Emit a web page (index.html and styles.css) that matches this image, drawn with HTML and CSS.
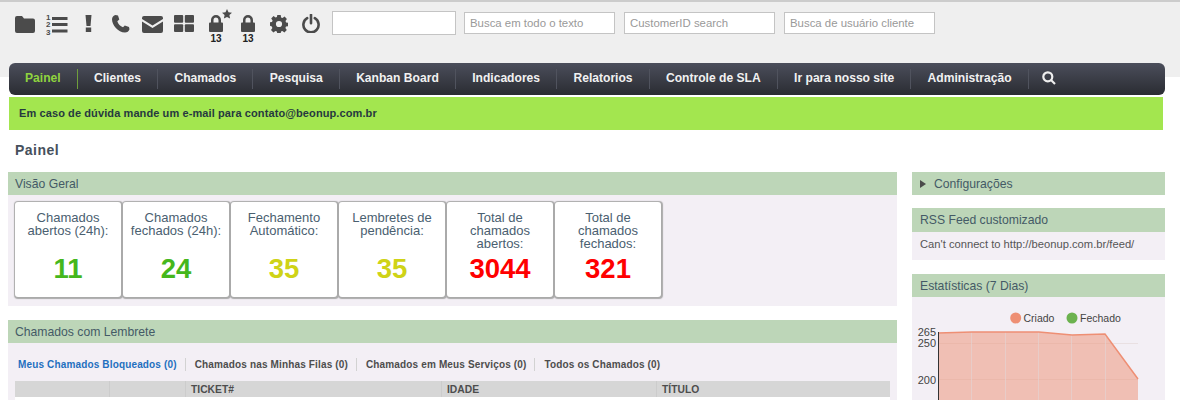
FILE: index.html
```html
<!DOCTYPE html>
<html lang="pt-BR">
<head>
<meta charset="utf-8">
<title>Painel</title>
<link rel="stylesheet" href="styles.css">
</head>
<body>
<header class="toolbar">
  <div class="icons">
    <a class="ico ico-folder"><svg width="20" height="17" viewBox="0 0 20 17"><path d="M2 0h5l2 2.500h9a2 2 0 0 1 2 2V15a2 2 0 0 1-2 2H2a2 2 0 0 1-2-2V2a2 2 0 0 1 2-2z"/></svg></a>
    <a class="ico ico-list"><svg width="23" height="21" viewBox="0 0 23 21"><path d="M6 3h15.500v3H6zM6 9h15.500v3H6zM6 15.500h15.500v3H6z"/><text x="0" y="6" class="num">1</text><text x="0" y="13" class="num">2</text><text x="0" y="20.500" class="num">3</text></svg></a>
    <a class="ico ico-bang"><svg width="7" height="17" viewBox="0 0 7 17"><path d="M.5 0h6l-1 11H1.500zM.8 12.500h5.400V17H.8z"/></svg></a>
    <a class="ico ico-phone"><svg width="18" height="18" viewBox="0 0 18 18"><path d="M3.500 0 6 .5l1.300 4-2 1.700c.8 2.800 3 5 5.700 6l1.800-1.800 4.200 1.500.5 2.300c-.5 2-2.500 3.300-4.500 3.300C6 17.500 0 10 0 4.200 0 2.300 1.500.5 3.500 0z"/></svg></a>
    <a class="ico ico-mail"><svg width="21" height="17" viewBox="0 0 21 17"><path d="M2 0h17a2 2 0 0 1 2 2v1l-10.500 6.500L0 3V2a2 2 0 0 1 2-2zM0 5.500l10.500 6.500L21 5.500V15a2 2 0 0 1-2 2H2a2 2 0 0 1-2-2z"/></svg></a>
    <a class="ico ico-grid"><svg width="20" height="17" viewBox="0 0 20 17"><rect width="9.200" height="7.800" rx="1"/><rect x="10.800" width="9.200" height="7.800" rx="1"/><rect y="9.200" width="9.200" height="7.800" rx="1"/><rect x="10.800" y="9.200" width="9.200" height="7.800" rx="1"/></svg></a>
    <a class="ico ico-lockstar">
      <svg class="star" width="10" height="10" viewBox="0 0 10 10"><path d="m5 0 1.500 3.300 3.500.4-2.600 2.400.7 3.500L5 7.900 1.900 9.600l.7-3.500L0 3.700l3.500-.4z"/></svg>
      <svg width="14" height="17" viewBox="0 0 14 17"><path d="M0 8.500a1 1 0 0 1 1-1h1V5a5 5 0 0 1 10 0v2.500h1a1 1 0 0 1 1 1V16a1 1 0 0 1-1 1H1a1 1 0 0 1-1-1zM4.500 7.500h5V5a2.500 2.500 0 0 0-5 0z"/></svg>
      <span class="count">13</span>
    </a>
    <a class="ico ico-lock">
      <svg width="14" height="17" viewBox="0 0 14 17"><path d="M0 8.500a1 1 0 0 1 1-1h1V5a5 5 0 0 1 10 0v2.500h1a1 1 0 0 1 1 1V16a1 1 0 0 1-1 1H1a1 1 0 0 1-1-1zM4.500 7.500h5V5a2.500 2.500 0 0 0-5 0z"/></svg>
      <span class="count">13</span>
    </a>
    <a class="ico ico-gear"><svg width="18" height="18" viewBox="0 0 18 18"><path fill-rule="evenodd" d="M7.300 0h3.400l.4 2.500 1.400.6 2.100-1.500 2.300 2.400-1.400 2 .6 1.500 2 .3v3.400l-2.100.4-.6 1.400 1.400 2.100-2.400 2.300-2-1.400-1.400.6-.4 2.400H7.300l-.4-2.400-1.500-.6-2 1.400-2.400-2.300 1.400-2.100-.6-1.400L0 10.700V7.300l2-.3.600-1.500-1.400-2 2.300-2.400 2.100 1.500 1.300-.6zM9 5.900a3.100 3.100 0 1 0 0 6.200 3.100 3.100 0 0 0 0-6.200z"/></svg></a>
    <a class="ico ico-power"><svg width="18" height="19" viewBox="0 0 18 19"><path class="stroke" d="M5.200 4.200a7.600 7.600 0 1 0 7.600 0M9 .8v8.400"/></svg></a>
  </div>
  <div class="searches">
    <input class="search search-first" type="text">
    <input class="search" type="text" placeholder="Busca em todo o texto">
    <input class="search" type="text" placeholder="CustomerID search">
    <input class="search" type="text" placeholder="Busca de usuário cliente">
  </div>
</header>

<nav class="navbar">
  <a class="nav-item active">Painel</a>
  <a class="nav-item">Clientes</a>
  <a class="nav-item">Chamados</a>
  <a class="nav-item">Pesquisa</a>
  <a class="nav-item">Kanban Board</a>
  <a class="nav-item">Indicadores</a>
  <a class="nav-item">Relatorios</a>
  <a class="nav-item">Controle de SLA</a>
  <a class="nav-item">Ir para nosso site</a>
  <a class="nav-item">Administração</a>
  <a class="nav-search"><svg width="14" height="14" viewBox="0 0 14 14"><circle cx="5.800" cy="5.800" r="4.500"/><path d="m9 9 4 4"/></svg></a>
</nav>

<div class="notice">Em caso de dúvida mande um e-mail para contato@beonup.com.br</div>

<h1 class="page-title">Painel</h1>

<div class="layout">
  <main class="main-col">
    <section class="panel">
      <h2 class="panel-head">Visão Geral</h2>
      <div class="cards">
        <div class="card"><p class="card-label">Chamados abertos (24h):</p><p class="card-value green">11</p></div>
        <div class="card"><p class="card-label">Chamados fechados (24h):</p><p class="card-value green">24</p></div>
        <div class="card"><p class="card-label">Fechamento Automático:</p><p class="card-value yellow">35</p></div>
        <div class="card"><p class="card-label">Lembretes de pendência:</p><p class="card-value yellow">35</p></div>
        <div class="card"><p class="card-label">Total de chamados abertos:</p><p class="card-value red">3044</p></div>
        <div class="card"><p class="card-label">Total de chamados fechados:</p><p class="card-value red">321</p></div>
      </div>
    </section>
    <section class="panel panel-tickets">
      <h2 class="panel-head">Chamados com Lembrete</h2>
      <div class="tickets-body">
        <ul class="tabs">
          <li class="tab selected">Meus Chamados Bloqueados (0)</li>
          <li class="tab">Chamados nas Minhas Filas (0)</li>
          <li class="tab">Chamados em Meus Serviços (0)</li>
          <li class="tab">Todos os Chamados (0)</li>
        </ul>
        <div class="table-head">
          <span class="th th-a"></span>
          <span class="th th-b"></span>
          <span class="th th-c">TICKET#</span>
          <span class="th th-d">IDADE</span>
          <span class="th th-e">TÍTULO</span>
        </div>
        <div class="table-rest"></div>
      </div>
    </section>
  </main>

  <aside class="side-col">
    <section class="side-panel">
      <h2 class="panel-head side-head"><span class="caret"></span>Configurações</h2>
    </section>
    <section class="side-panel">
      <h2 class="panel-head side-head rss-head">RSS Feed customizado</h2>
      <p class="rss-body">Can't connect to http://beonup.com.br/feed/</p>
    </section>
    <section class="side-panel">
      <h2 class="panel-head side-head">Estatísticas (7 Dias)</h2>
      <div class="chart-body">
        <svg class="chart" width="253" height="103" viewBox="0 0 253 103">
          <circle cx="103.700" cy="21" r="5.500" fill="#ee8f74"/>
          <text x="111.500" y="25" class="legend">Criado</text>
          <circle cx="160" cy="21" r="5.500" fill="#6cb24f"/>
          <text x="168" y="25" class="legend">Fechado</text>
          <text x="24" y="39" text-anchor="end" class="tick">265</text>
          <text x="24" y="50" text-anchor="end" class="tick">250</text>
          <text x="24" y="87" text-anchor="end" class="tick">200</text>
          <path d="M26.500 46.500H226M26.500 82.500H226" class="grid"/>
          <path d="M26 36 60 35 93 35 127 35 160 38 193 37 226 82V103H26z" fill="#ee8f74" fill-opacity=".5"/>
          <path d="M59.500 35V103M93.500 35V103M126.500 35V103M159.500 38V103M193.500 37V103" class="grid"/>
          <path d="M26 36 60 35 93 35 127 35 160 38 193 37 226 82" fill="none" stroke="#ee8f74" stroke-width="1.500"/>
          <path d="M26.500 35V103" stroke="#333" fill="none"/>
        </svg>
      </div>
    </section>
  </aside>
</div>
</body>
</html>
```
FILE: styles.css
```css
* { box-sizing: border-box; }
html, body { margin: 0; height: 400px; overflow: hidden; background: #fff; }
body { font-family: "Liberation Sans", Arial, sans-serif; color: #4a5766; }
a { color: inherit; text-decoration: none; }
h1, h2, p, ul { margin: 0; padding: 0; }

.toolbar {
  height: 77px;
  background: #efefef;
  border-top: 2px solid #ccc;
  display: flex;
  align-items: flex-start;
  padding: 9px 0 0 15px;
}
.icons { display: flex; width: 316px; height: 40px; }
.ico { display: block; position: relative; height: 40px; }
.ico svg { display: block; fill: #4b4b4b; }
.ico-folder { width: 31px; padding-top: 5px; }
.ico-list { width: 39px; padding-top: 3px; }
.ico-bang { width: 27px; padding-top: 4px; }
.ico-phone { width: 30px; padding-top: 4px; }
.ico-mail { width: 32px; padding-top: 5px; }
.ico-grid { width: 35px; padding-top: 4px; }
.ico-lockstar { width: 32px; padding-top: 4px; }
.ico-lock { width: 29px; padding-top: 4px; }
.ico-gear { width: 32px; padding-top: 4px; }
.ico-power { width: 18px; padding-top: 3px; }
.ico .num { font-size: 8px; font-weight: 700; fill: #4b4b4b; }
.ico .stroke { fill: none; stroke: #4b4b4b; stroke-width: 2.600; stroke-linecap: round; }
.star { position: absolute; left: 13px; top: -2px; }
.count {
  display: block;
  width: 14px;
  text-align: center;
  font-size: 10px;
  line-height: 11px;
  font-weight: 700;
  color: #222;
  margin-top: 1px;
}

.searches { display: flex; padding-top: 1px; margin-left: 1px; }
.search {
  width: 151px;
  height: 22px;
  margin: 0 0 0 9px;
  padding: 0 5px;
  border: 1px solid #c4c4c4;
  background: #fff;
  font: 11.400px "Liberation Sans", Arial, sans-serif;
  color: #555;
  outline: none;
}
.search::placeholder { color: #999; opacity: 1; }
.search-first { width: 124px; height: 24px; margin: -1px -1px 0 0; }

.navbar {
  height: 32px;
  margin: -14px 15px 0 9px;
  position: relative;
  display: flex;
  align-items: center;
  border-radius: 6px;
  background: linear-gradient(#4b4e5b, #2a2c32);
}
.nav-item {
  display: block;
  padding: 0 16.200px;
  height: 20px;
  line-height: 18px;
  font-size: 12.100px;
  font-weight: 700;
  color: #f1f1f1;
  border-right: 1px solid #50535e;
  white-space: nowrap;
}
.nav-item:first-child { padding-left: 16px; }
.nav-item.active { color: #8fd33f; border-right-color: #6f9e3c; }
.nav-search { display: block; margin: -3px 0 0 13px; height: 14px; }
.nav-search svg { display: block; fill: none; stroke: #eee; stroke-width: 2.200; }

.notice {
  height: 33px;
  margin: 2px 17px 0 9px;
  background: #a3e64f;
  padding-left: 10px;
  font-size: 11px;
  line-height: 32px;
  font-weight: 700;
  color: #26393f;
  letter-spacing: .1px;
}
.page-title {
  margin: 12px 0 0 15px;
  height: 30px;
  font-size: 14px;
  line-height: 16px;
  font-weight: 700;
  color: #46505c;
  letter-spacing: .5px;
}

.layout { display: flex; padding-left: 8px; gap: 15px; }
.main-col { width: 889px; }
.side-col { width: 253px; }

.panel-head {
  height: 23px;
  background: #bdd6b8;
  padding: 1px 0 0 7px;
  font-size: 12.200px;
  line-height: 22px;
  font-weight: 400;
  color: #445a66;
}
.cards {
  display: flex;
  gap: 2px;
  height: 111px;
  padding: 7px 0 0 7px;
  background: #f3eff5;
}
.card {
  width: 106px;
  height: 95px;
  background: #fff;
  border-radius: 3px;
  box-shadow: .5px .5px 1px 1px #aaa;
  padding: 9px 2px 0;
  text-align: center;
}
.card-label {
  height: 39px;
  font-size: 13px;
  line-height: 13px;
  color: #4a6070;
}
.card-value { font-size: 27.500px; line-height: 38px; font-weight: 700; }
.green { color: #45b71c; }
.yellow { color: #cfd317; }
.red { color: #f00; }

.panel-tickets { margin-top: 14px; }
.tickets-body { background: #f3eff5; height: 57px; padding: 0 7px; }
.tabs { display: flex; align-items: flex-start; list-style: none; height: 38px; padding: 15px 0 0 3px; }
.tab {
  font-size: 10px;
  line-height: 13px;
  font-weight: 700;
  color: #4d4d4d;
  white-space: nowrap;
  letter-spacing: .15px;
}
.tab + .tab { margin-left: 8px; padding-left: 9px; border-left: 1px solid #d2d2d2; }
.tab.selected { color: #1f6fbf; }
.table-head { display: flex; height: 16px; background: #d6d6d6; }
.th {
  display: block;
  padding: 1px 0 0 5px;
  font-size: 10.300px;
  line-height: 16px;
  font-weight: 700;
  color: #4d4d4d;
  border-left: 1px solid #ccc;
}
.th-a { width: 94px; border-left: 0; }
.th-b { width: 76px; }
.th-c { width: 256px; }
.th-d { width: 215px; }
.th-e { width: 234px; }
.table-rest { height: 3px; background: #fff; }

.side-panel { margin-bottom: 13px; background: #f3eff5; }
.side-panel:nth-child(2) { margin-bottom: 14px; }
.side-head { padding-left: 8px; }
.caret {
  display: inline-block;
  width: 0;
  height: 0;
  margin-right: 8px;
  border-left: 6px solid #4b4b4b;
  border-top: 4.500px solid transparent;
  border-bottom: 4.500px solid transparent;
}
.rss-head { height: 24px; }
.rss-body { height: 28px; padding-left: 8px; font-size: 11.200px; line-height: 25px; color: #555; }
.chart-body { height: 103px; }
.chart { display: block; }
.legend { font-size: 10.500px; fill: #444; }
.tick { font-size: 11px; fill: #444; }
.grid { stroke: #e3d6d6; stroke-opacity: .6; fill: none; }
```
